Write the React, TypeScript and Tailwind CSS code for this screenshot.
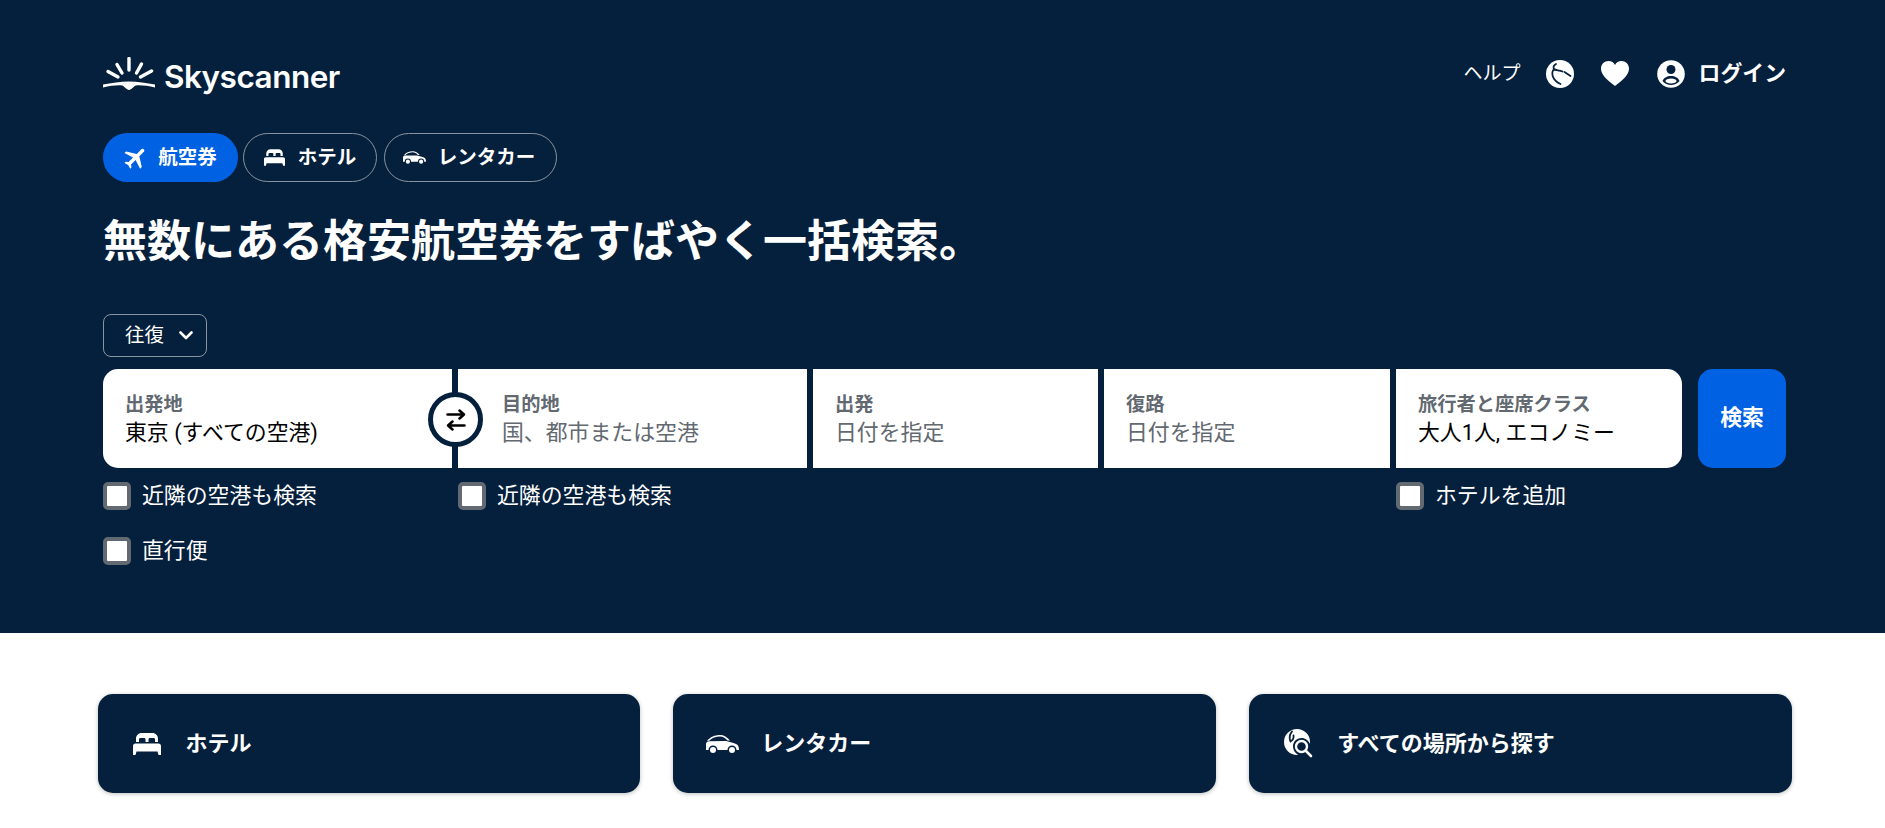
import React from "react";
import { MdFlight } from "react-icons/md";

const jp = "font-['Roboto','Noto_Sans_CJK_JP','Noto_Sans',sans-serif]";

function Logo() {
  return (
    <div className="flex items-start">
      <svg width="52" height="33" viewBox="0 0 52 33" className="text-white">
        <g stroke="currentColor" strokeWidth="3.4" strokeLinecap="round">
          <path d="M26 1.5V13" />
          <path d="M14 7.5L19 16" />
          <path d="M38.5 7L33.5 16" />
          <path d="M5 14.5L15 20" />
          <path d="M48.5 14L37.5 20" />
        </g>
        <path
          fill="currentColor"
          d="M0 27.5C8 26 18 24.5 26 24.5C34 24.5 44 26 52 27.5L52 30.5C45 29 38 28 33 28.5C30.5 29 28.500 33 26 33C23.500 33 21.500 29 19 28.500C14 28 7 29 0 30.500Z"
        />
      </svg>
      <span className="ml-[9px] mt-[2px] text-[31.5px] leading-[36px] font-semibold tracking-[-0.5px] text-white font-['Inter',sans-serif]">
        Skyscanner
      </span>
    </div>
  );
}

function BedIcon({ className }: { className: string }) {
  return (
    <svg viewBox="0 0 28 22" className={`shrink-0 ${className}`} fill="currentColor">
      <path d="M3 9V5.500C3 2.500 5.500 0 8.500 0h11C22.500 0 25 2.500 25 5.500V9h-3V6.500C22 5.500 21.500 5 20.500 5h-3.500C16 5 15.500 5.500 15.500 6.500V9h-3V6.500C12.500 5.500 12 5 11 5H7.500C6.500 5 6 5.500 6 6.500V9Z" />
      <path d="M2.500 10.500h23C27 10.500 28 11.500 28 13v9h-2.500l-1-3.500h-21l-1 3.500H0v-9c0-1.500 1-2.500 2.500-2.500Z" />
    </svg>
  );
}

function CarIcon({ className }: { className: string }) {
  return (
    <svg viewBox="0 0 33 18" className={`shrink-0 ${className}`} fill="currentColor">
      <path d="M1 6C4 2 9 0 14 0C18 0 21 2 24 5.500H21.500C19 3 17 1.500 14 1.500C10 1.500 6 3 3.500 5.500Z" />
      <path d="M0 15V9C0 7.500 1.500 6.500 3 6.300L20 6C24 7 28 8 30 9C32 10 33 11.500 33 15H30.500A4.500 4.500 0 0 0 21.500 15H11.500A4.500 4.500 0 0 0 2.500 15Z" />
      <circle cx="7" cy="15" r="3" />
      <circle cx="26" cy="15" r="3" />
    </svg>
  );
}

function GlobeIcon() {
  return (
    <svg viewBox="0 0 28 28" className="w-7 h-7 text-white" fill="currentColor">
      <circle cx="14" cy="14" r="14" />
      <path
        fill="none"
        stroke="#05203c"
        strokeWidth="1.800"
        strokeLinecap="round"
        d="M10 4C7.500 5.500 7 7.500 8 9C9.500 10.500 13 10 16.500 11.500M8 9C5 12.500 5.500 20 14.500 24M18.500 12L24.500 16"
      />
    </svg>
  );
}

function AccountIcon() {
  return (
    <svg viewBox="0 0 28 28" className="w-7 h-7 text-white" fill="currentColor">
      <circle cx="14" cy="14" r="13.800" />
      <circle cx="14" cy="9.500" r="4.500" fill="#05203c" />
      <path fill="#05203c" d="M5.500 21C6.500 18 10 16 14 16S21.500 18 22.500 21C20.500 23.500 17 25 14 25S7.500 23.500 5.500 21Z" />
      <ellipse cx="14" cy="21" rx="5.500" ry="2.600" fill="#fff" />
    </svg>
  );
}

function HeartIcon() {
  return (
    <svg viewBox="0 0 28 25" className="w-7 h-[25px] text-white" fill="currentColor">
      <path d="M14 25C5 18 0 13.500 0 7.500C0 3 3.500 0 7.500 0C10.500 0 12.800 1.500 14 4C15.200 1.500 17.500 0 20.500 0C24.500 0 28 3 28 7.500C28 13.500 23 18 14 25Z" />
    </svg>
  );
}

function SearchGlobeIcon() {
  return (
    <svg viewBox="0 0 29 29" className="w-[29px] h-[29px] shrink-0 text-white" fill="none">
      <path
        fill="currentColor"
        d="M13 0A13 13 0 0 1 26 13C26 13.800 26 14 25.800 14.800C24.500 11.500 21.500 9 17.500 9C12.500 9 9 13 9 17.500C9 21 11 24 14 25.800C13.500 26 13.300 26 13 26A13 13 0 0 1 13 0Z"
      />
      <path stroke="#05203c" strokeWidth="1.800" strokeLinecap="round" d="M8 2.500C5.500 5.500 5 9 6.500 12.500C9 11 10 9 9.500 6.500" />
      <path fill="currentColor" d="M3 15C4 19.500 7.500 23 11 24C8.500 22 6.500 18.500 6 15Z" />
      <circle cx="17.500" cy="17.500" r="5.500" stroke="currentColor" strokeWidth="2.400" />
      <path stroke="currentColor" strokeWidth="2.600" strokeLinecap="round" d="M22 22L27 27" />
    </svg>
  );
}

function SwapIcon() {
  return (
    <svg viewBox="0 0 20 22" className="w-5 h-[22px]" fill="none" stroke="#000" strokeWidth="2.500" strokeLinecap="round" strokeLinejoin="round">
      <path d="M1.500 5.500H18M13.500 1.500L18 5.500L13.500 9.500" />
      <path d="M18.500 16.500H2M6.500 12.500L2 16.500L6.500 20.500" />
    </svg>
  );
}

function Checkbox({ label, className }: { label: string; className?: string }) {
  return (
    <label className={`flex items-center ${className ?? ""}`}>
      <span className="w-[28px] h-[28px] rounded-[5px] border-[4px] border-[#626971] bg-white" />
      <span className="ml-[11px] text-[21.875px] leading-[28px] text-white">{label}</span>
    </label>
  );
}

function Field({ label, value, placeholder, className }: { label: string; value: string; placeholder?: boolean; className: string }) {
  return (
    <div className={`bg-white h-[99px] pt-[2px] flex flex-col justify-center ${className}`}>
      <div className="text-[19.25px] leading-[25px] font-bold text-[#626971]">{label}</div>
      <div className={`text-[21.875px] leading-[31px] ${placeholder ? "text-[#626971]" : "text-black"}`}>{value}</div>
    </div>
  );
}

function Tab({ icon, label, active, className }: { icon: React.ReactNode; label: string; active?: boolean; className: string }) {
  return (
    <button
      className={`h-[49px] rounded-full flex items-center justify-center text-[19.5px] font-bold text-white ${
        active ? "bg-[#0062e3]" : "border border-[#8a94a0]"
      } ${className}`}
    >
      {icon}
      <span>{label}</span>
    </button>
  );
}

function LinkCard({ icon, label }: { icon: React.ReactNode; label: string }) {
  return (
    <div className="h-[99px] rounded-[15px] bg-[#05203c] shadow-[0_1px_4px_rgba(37,32,31,0.3)] flex items-center pl-[33px] text-white">
      <div className="w-[33px] flex justify-center">{icon}</div>
      <div className="ml-[22px] text-[22px] font-bold">{label}</div>
    </div>
  );
}

export default function App() {
  return (
    <div className={`bg-white ${jp}`}>
      <div className="bg-[#05203c] h-[633px] pl-[103px] pr-[99px] pt-[57px]">
        <div className="flex justify-between items-start">
          <Logo />
          <div className="flex items-center h-[33px] text-white">
            <span className="pt-[2px] text-[19px]">ヘルプ</span>
            <div className="ml-[25px]">
              <GlobeIcon />
            </div>
            <div className="ml-[27px]">
              <HeartIcon />
            </div>
            <div className="ml-[28px]">
              <AccountIcon />
            </div>
            <span className="ml-[14px] pt-[1px] text-[21.875px] font-bold">ログイン</span>
          </div>
        </div>

        <div className="flex mt-[38px] gap-[5px]">
          <Tab
            active
            className="w-[135px] pr-[2px]"
            icon={<MdFlight className="w-[28px] h-[28px] rotate-45 mr-[8px]" />}
            label="航空券"
          />
          <Tab className="w-[134px]" icon={<BedIcon className="w-[21px] h-[17px] mr-[13px]" />} label="ホテル" />
          <Tab className="w-[173px] ml-[2px] pr-[3px]" icon={<CarIcon className="w-[23px] h-[13px] mr-[12px]" />} label="レンタカー" />
        </div>

        <h1 className="mt-[27px] text-[44px] leading-[66px] font-bold text-white">
          無数にある格安航空券をすばやく一括検索。
        </h1>

        <button className="mt-[39px] w-[104px] h-[43px] rounded-[8px] border border-[#8a94a0] flex items-center pl-[21px] text-white text-[19.5px]">
          往復
          <svg viewBox="0 0 14 9" className="w-[14px] h-[9px] ml-[15px]" fill="none" stroke="currentColor" strokeWidth="2.600" strokeLinecap="round" strokeLinejoin="round">
            <path d="M1.500 1.500L7 7L12.500 1.500" />
          </svg>
        </button>

        <div className="flex mt-[12px]">
          <div className="relative flex gap-[6px] rounded-[15px] overflow-hidden">
            <Field className="w-[349px] pl-[22px]" label="出発地" value="東京 (すべての空港)" />
            <Field className="w-[349px] pl-[44px]" label="目的地" value="国、都市または空港" placeholder />
            <Field className="w-[285px] pl-[22px]" label="出発" value="日付を指定" placeholder />
            <Field className="w-[286px] pl-[22px]" label="復路" value="日付を指定" placeholder />
            <Field className="w-[286px] pl-[22px]" label="旅行者と座席クラス" value="大人1人, エコノミー" />
            <div className="absolute left-[325px] top-[23px] w-[55px] h-[55px] rounded-full bg-white border-[5px] border-[#05203c] flex items-center justify-center">
              <SwapIcon />
            </div>
          </div>
          <button className="ml-[16px] w-[88px] h-[99px] rounded-[15px] bg-[#0062e3] text-white text-[21.875px] font-bold">
            検索
          </button>
        </div>

        <div className="flex mt-[14px]">
          <div className="w-[355px]">
            <Checkbox label="近隣の空港も検索" />
          </div>
          <div className="w-[938px]">
            <Checkbox label="近隣の空港も検索" />
          </div>
          <Checkbox label="ホテルを追加" />
        </div>
        <Checkbox className="mt-[27px]" label="直行便" />
      </div>

      <div className="grid grid-cols-3 gap-[33px] pl-[97.5px] pr-[93px] pt-[61px] h-[195px] bg-white">
        <LinkCard icon={<BedIcon className="w-[28px] h-[22px]" />} label="ホテル" />
        <LinkCard icon={<CarIcon className="w-[33px] h-[18px]" />} label="レンタカー" />
        <LinkCard icon={<SearchGlobeIcon />} label="すべての場所から探す" />
      </div>
    </div>
  );
}
